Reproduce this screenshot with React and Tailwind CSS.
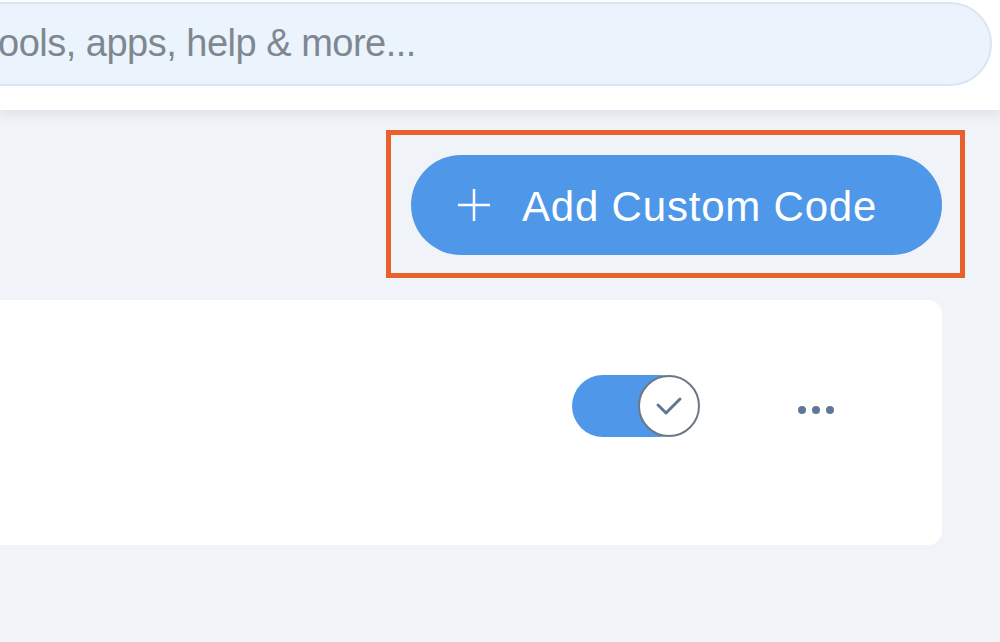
export default function App() {
  return (
    <div className="w-[1000px] h-[642px] overflow-hidden bg-[#f0f3f7] flex flex-col" style={{ fontFamily: '"Liberation Sans", Arial, sans-serif' }}>
      <div className="h-[110px] bg-white shadow-[0_4px_10px_rgba(180,190,205,0.35)] relative z-10 flex items-start pt-[2px] overflow-hidden">
        <div className="ml-[-60px] w-[1052px] h-[84px] rounded-full bg-[#ebf4fd] border-2 border-[#d9e6f2] flex items-center">
          <span className="ml-[56px] text-[38px] tracking-[-0.5px] text-[#7f8790] leading-none pb-[2px]">ools, apps, help &amp; more...</span>
        </div>
      </div>
      <div className="flex justify-end pr-[35px] mt-[20px]">
        <div className="border-[5px] border-[#e8602c] pl-[20px] pt-[20px] pr-[18px] pb-[18px]">
          <button className="w-[531px] h-[100px] rounded-full bg-[#4f98e9] flex items-center text-white">
            <svg width="34" height="34" viewBox="0 0 34 34" className="ml-[46px]">
              <path d="M17 1V33M1 17H33" stroke="white" strokeWidth="2.5" />
            </svg>
            <span className="ml-[31px] text-[42px] tracking-[0.8px] leading-none pt-[4px]">Add Custom Code</span>
          </button>
        </div>
      </div>
      <div className="flex justify-end pr-[58px] mt-[22px]">
        <div className="w-[1000px] shrink-0 h-[245px] bg-white rounded-[14px] flex items-start justify-end pr-[108px]">
          <div className="mt-[75px] relative w-[128px] h-[62px]">
            <div className="absolute left-0 top-0 w-[118px] h-[62px] rounded-full bg-[#4f98e9]" />
            <div className="absolute right-0 top-0 w-[62px] h-[62px] rounded-full bg-white border-2 border-[#6c7785] flex items-center justify-center">
              <svg width="28" height="22" viewBox="0 0 28 22">
                <path d="M3 10L11 18L25 4" fill="none" stroke="#5f7694" strokeWidth="3" strokeLinecap="round" strokeLinejoin="round" />
              </svg>
            </div>
          </div>
          <div className="ml-[98px] mt-[106px] flex gap-[6px]">
            <div className="w-[8px] h-[8px] rounded-full bg-[#5f7896]" />
            <div className="w-[8px] h-[8px] rounded-full bg-[#5f7896]" />
            <div className="w-[8px] h-[8px] rounded-full bg-[#5f7896]" />
          </div>
        </div>
      </div>
    </div>
  );
}
